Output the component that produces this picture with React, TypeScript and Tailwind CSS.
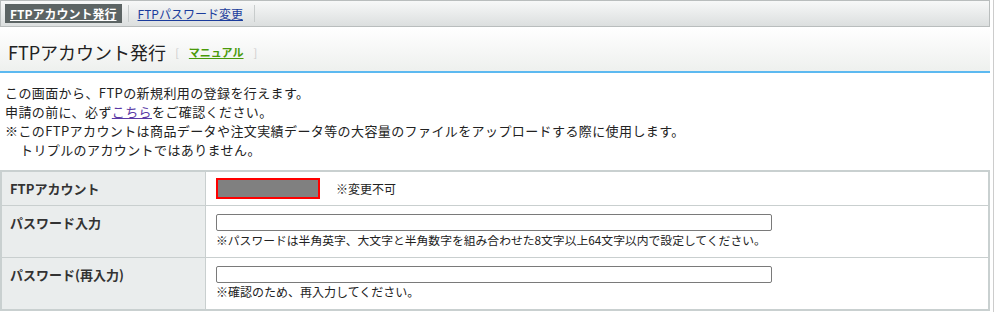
const jp = "font-['Noto_Sans_CJK_JP','Liberation_Sans',sans-serif]";

function TabBar() {
  return (
    <div className="flex h-[27px] items-center border border-[#b9bdbd] bg-gradient-to-b from-[#f7f8f8] to-[#dcdfdf] pl-[4px] text-[12px]">
      <span className="flex h-[19px] items-center bg-[#5c6464] px-[5px] font-bold text-white underline">
        FTPアカウント発行
      </span>
      <span className="mx-[6px] h-[17px] w-px bg-[#c8cccc]" />
      <span className="px-[3px] text-[#1b3c9c] underline">FTPパスワード変更</span>
      <span className="ml-[8px] h-[17px] w-px bg-[#c8cccc]" />
    </div>
  );
}

function TitleBar() {
  return (
    <div className="flex h-[46px] items-center border-b-2 border-[#5cb9f0] bg-gradient-to-b from-white to-[#eef0ee] pl-[8px] pt-[6px]">
      <h1 className="text-[18px] leading-none text-[#222]">FTPアカウント発行</h1>
      <span className="ml-[9px] text-[11px] text-[#ccc]">[</span>
      <span className="ml-[10px] text-[11px] font-bold text-[#4a9a0a] underline">マニュアル</span>
      <span className="ml-[10px] text-[11px] text-[#ccc]">]</span>
    </div>
  );
}

function Row({ label, children, last }: { label: string; children: React.ReactNode; last?: boolean }) {
  return (
    <div className={`flex ${last ? '' : 'border-b border-[#c9cfcf]'}`}>
      <div className="w-[204px] shrink-0 border-r border-[#c9cfcf] bg-[#eaeded] px-[8px] pt-[7px] text-[13px] font-bold text-[#333]">
        {label}
      </div>
      <div className="flex-1 px-[10px]">{children}</div>
    </div>
  );
}

export default function App() {
  return (
    <div className={`${jp} h-[312px] w-[994px] border-r border-[#cccccc] bg-white text-[#222]`}>
      <div className="w-[990px]">
        <TabBar />
        <TitleBar />

        <div className="px-[5px] pt-[10px] text-[13px] leading-[19px] tracking-[0.4px]">
          <p>この画面から、FTPの新規利用の登録を行えます。</p>
          <p>
            申請の前に、必ず<span className="text-[#5b3aa6] underline">こちら</span>をご確認ください。
          </p>
          <p>※このFTPアカウントは商品データや注文実績データ等の大容量のファイルをアップロードする際に使用します。</p>
          <p className="pl-[15px]">トリプルのアカウントではありません。</p>
        </div>

        <div className="mt-[11px] border-2 border-[#c9d0d0] text-[12px]">
          <Row label="FTPアカウント">
            <div className="flex h-[33px] items-center">
              <div className="h-[21px] w-[104px] border-2 border-[#ff0000] bg-[#808080]" />
              <span className="ml-[16px]">※変更不可</span>
            </div>
          </Row>
          <Row label="パスワード入力">
            <div className="pb-[9px] pt-[8px]">
              <input type="password" className="block h-[17px] w-[556px] rounded-[2px] border border-[#7a7a7a] bg-white" />
              <p className="mt-[1px] text-[11.8px] leading-[16px]">
                ※パスワードは半角英字、大文字と半角数字を組み合わせた8文字以上64文字以内で設定してください。
              </p>
            </div>
          </Row>
          <Row label="パスワード(再入力)" last>
            <div className="pb-[9px] pt-[8px]">
              <input type="password" className="block h-[17px] w-[556px] rounded-[2px] border border-[#7a7a7a] bg-white" />
              <p className="mt-[1px] leading-[16px]">※確認のため、再入力してください。</p>
            </div>
          </Row>
        </div>
      </div>
    </div>
  );
}
